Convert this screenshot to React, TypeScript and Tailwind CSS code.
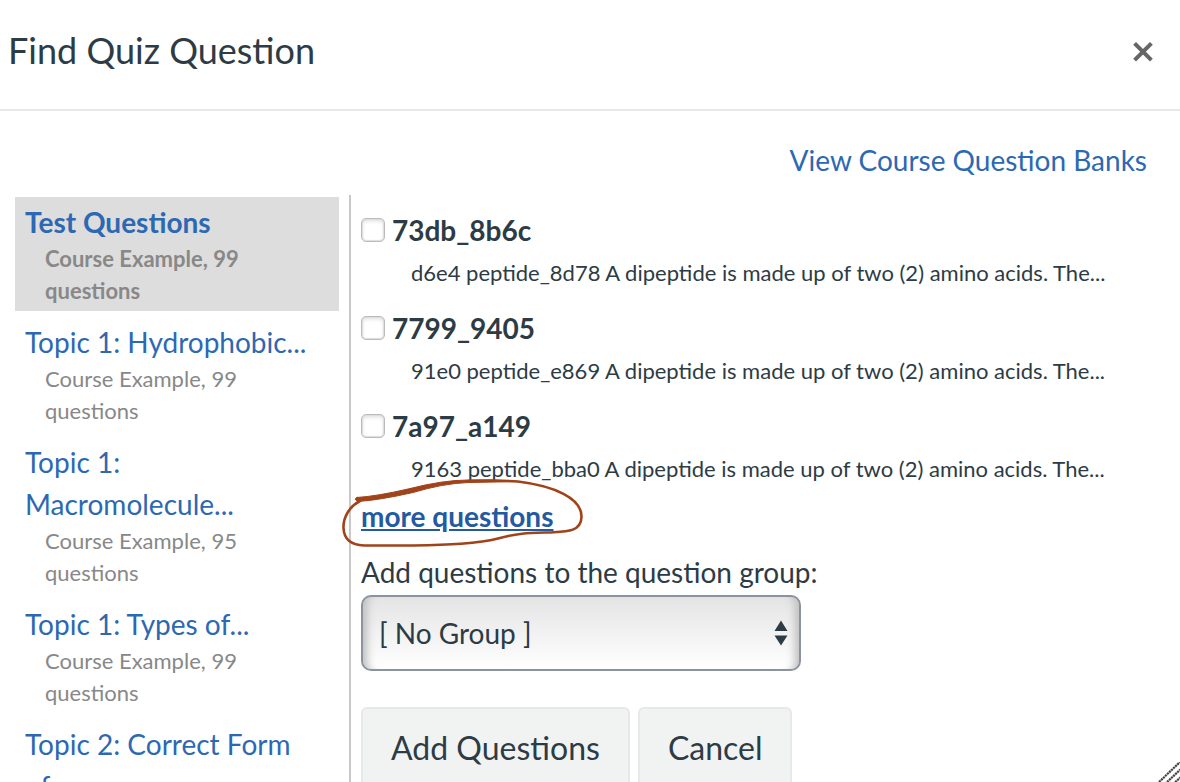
import React from "react";

type Bank = { title: string; meta: string; selected?: boolean };

const banks: Bank[] = [
  { title: "Test Questions", meta: "Course Example, 99 questions", selected: true },
  { title: "Topic 1: Hydrophobic...", meta: "Course Example, 99 questions" },
  { title: "Topic 1: Macromolecule...", meta: "Course Example, 95 questions" },
  { title: "Topic 1: Types of...", meta: "Course Example, 99 questions" },
  { title: "Topic 2: Correct Form of...", meta: "Course Example, 99 questions" },
];

const questions = [
  { name: "73db_8b6c", text: "d6e4 peptide_8d78 A dipeptide is made up of two (2) amino acids. The..." },
  { name: "7799_9405", text: "91e0 peptide_e869 A dipeptide is made up of two (2) amino acids. The..." },
  { name: "7a97_a149", text: "9163 peptide_bba0 A dipeptide is made up of two (2) amino acids. The..." },
];

function Header() {
  return (
    <header className="flex shrink-0 items-center justify-between border-b-2 border-[#e8e8e8] pt-6 pr-[10px] pb-8 pl-2">
      <h1 className="text-[36px] leading-[53px]">Find Quiz Question</h1>
      <button type="button" aria-label="Close" className="mr-4 flex size-[22px] items-center justify-center">
        <svg viewBox="0 0 22 22" className="size-[22px]" fill="none" stroke="#666" strokeWidth="4">
          <path d="M2.600 3.300 19.400 20.100M19.400 3.300 2.600 20.100" />
        </svg>
      </button>
    </header>
  );
}

function BankItem({ bank }: { bank: Bank }) {
  return (
    <li className={bank.selected ? "bg-[#ddd] px-[10px] py-1 font-bold" : "px-[10px] py-1"}>
      <a href="#bank" className="block leading-[42px] text-[#2d68b2]">
        {bank.title}
      </a>
      <p className="pl-5 text-[22px] leading-8 text-[#888]">{bank.meta}</p>
    </li>
  );
}

function Question({ name, text, id }: { name: string; text: string; id: string }) {
  return (
    <li>
      <div className="flex items-center gap-[7px]">
        <input
          id={id}
          type="checkbox"
          className="size-6 appearance-none rounded-[5px] border border-[#bbb] bg-white shadow-[inset_0_0_1px_1px_#ddd,inset_0_2px_4px_#ddd] checked:bg-[#2d68b2]"
        />
        <label htmlFor={id} className="leading-[42px] font-bold">
          {name}
        </label>
      </div>
      <p className="pl-[50px] text-[22px] leading-[44px]">{text}</p>
    </li>
  );
}

function Circled({ children }: { children: React.ReactNode }) {
  return (
    <div className="relative w-fit">
      {children}
      <svg
        viewBox="0 0 250 76"
        className="pointer-events-none absolute -top-[23px] -left-[23px] h-[76px] w-[250px] max-w-none"
        fill="none"
        stroke="#a1431a"
        strokeLinecap="round"
        strokeLinejoin="round"
      >
        <path
          strokeWidth="2.600"
          d="M22 27C12 32 5 43 5.500 54C6 66 14 71 26 71.500L75 71.500C110 71 139 70 162 64C180 59 190 59 210 58.500C226 57.500 243 59 243.500 43C244 24 216 12 180 7.500C160 6 145 6.500 130 7"
        />
        <path
          fill="#a1431a"
          strokeWidth="1"
          d="M19 23.500Q40 22 70 15Q105 6 130 6Q160 5.500 180 7.500Q155 8 130 8.500Q105 9.500 75 18.500Q42 26 20 27.500Q15 25 19 23.500Z"
        />
      </svg>
    </div>
  );
}

export default function App() {
  return (
    <div className="relative flex h-screen flex-col overflow-hidden bg-white font-[Lato,sans-serif] text-[28px] text-[#2d3b45]">
      <Header />
      <nav className="flex shrink-0 justify-end px-[33px] pt-7 pb-[14px]">
        <a href="#banks" className="leading-[42px] text-[#2d68b2]">
          View Course Question Banks
        </a>
      </nav>
      <div className="flex min-h-0 flex-1">
        <ul className="flex w-[349px] shrink-0 flex-col gap-[6px] pt-[2px] pr-[10px] pl-[15px]">
          {banks.map((bank) => (
            <BankItem key={bank.title} bank={bank} />
          ))}
        </ul>
        <main className="flex min-w-0 flex-1 flex-col items-start border-l-2 border-[#c8c8c8] pt-[14px] pl-[10px]">
          <ul className="flex flex-col gap-3 pb-[6px]">
            {questions.map((q, i) => (
              <Question key={q.name} id={"question-" + i} name={q.name} text={q.text} />
            ))}
          </ul>
          <Circled>
            <a href="#more" className="block leading-[38px] font-bold text-[#245a9f] underline">
              more questions
            </a>
          </Circled>
          <label htmlFor="group" className="mt-4 leading-[42px]">
            Add questions to the question group:
          </label>
          <div className="relative mt-[2px] w-[440px] max-w-full">
            <select
              id="group"
              className="block h-[76px] w-full appearance-none rounded-[10px] border-2 border-[#8d939e] bg-linear-to-b from-[#e4e4e4] to-white pl-4 shadow-[inset_12px_0_8px_-8px_#bebebe,inset_-12px_0_8px_-8px_#bebebe]"
            >
              <option>[ No Group ]</option>
            </select>
            <svg
              viewBox="0 0 14 26"
              className="pointer-events-none absolute top-[25px] right-[13px] h-[26px] w-[14px]"
              fill="#2d3b45"
            >
              <path d="M7 .5 13.500 11H.5ZM7 25.500.5 15.500H13.500Z" />
            </svg>
          </div>
          <div className="mt-9 flex gap-2 text-[32px]">
            <button type="button" className="h-[82px] rounded-[6px] border-2 border-[#e6e8e9] bg-[#f1f3f3] px-7">
              Add Questions
            </button>
            <button type="button" className="h-[82px] rounded-[6px] border-2 border-[#e6e8e9] bg-[#f1f3f3] px-7">
              Cancel
            </button>
          </div>
        </main>
      </div>
      <svg
        viewBox="0 0 24 20"
        className="absolute right-0 bottom-0 h-5 w-6"
        fill="none"
        stroke="#444"
        strokeWidth="2.200"
        strokeDasharray="2.200 .6"
      >
        <path d="M1 22 24 0M9 22 25 7M17 22 25 15" />
      </svg>
    </div>
  );
}
